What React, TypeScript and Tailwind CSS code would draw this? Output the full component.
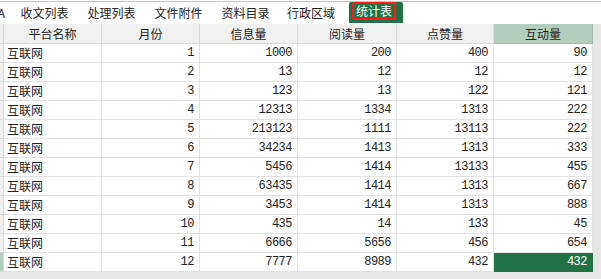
import React from 'react';

const rows: [number, number, number, number, number][] = [
  [1, 1000, 200, 400, 90],
  [2, 13, 12, 12, 12],
  [3, 123, 13, 122, 121],
  [4, 12313, 1334, 1313, 222],
  [5, 213123, 1111, 13113, 222],
  [6, 34234, 1413, 1313, 333],
  [7, 5456, 1414, 13133, 455],
  [8, 63435, 1414, 1313, 667],
  [9, 3453, 1414, 1313, 888],
  [10, 435, 14, 133, 45],
  [11, 6666, 5656, 456, 654],
  [12, 7777, 8989, 432, 432],
];

const tabs = ['收文列表', '处理列表', '文件附件', '资料目录'];
const headers = ['平台名称', '月份', '信息量', '阅读量', '点赞量'];

const cjk = { fontFamily: '"Noto Sans CJK SC", "Noto Sans", sans-serif' };
const num = { fontFamily: '"Liberation Mono", monospace' };

const grid = 'grid grid-cols-[4px_98px_98px_98px_99px_97px_99px_8px]';

const App: React.FC = () => {
  return (
    <div className="w-[601px] h-[279px] bg-white overflow-hidden text-[#222]" style={cjk}>
      {/* Sheet tabs */}
      <div className="h-[24px] pt-[1px]">
        <div className="h-[23px] border-t border-[#c4c4c4] flex items-start text-[12px]">
          <div className="w-[11px] h-[22px] flex items-center overflow-hidden">
            <div className="w-[5px] overflow-hidden flex justify-end">
              <span className="shrink-0">A</span>
            </div>
          </div>
          {tabs.map((t) => (
            <div key={t} className="w-[67px] h-[22px] flex items-center justify-center">{t}</div>
          ))}
          <div className="w-[64px] h-[22px] flex items-center justify-center">行政区域</div>
          <div className="w-[6px]" />
          <div className="h-[21px] bg-[#217346] pl-[3px] pr-[7px] pt-[0px] rounded-t-[2px]">
            <div className="h-[18px] border-2 border-[#ff1a1a] rounded-[3px] px-[2px] flex items-center text-white leading-none">
              统计表
            </div>
          </div>
        </div>
      </div>

      {/* Header row */}
      <div className={`${grid} h-[20px] text-[12px]`}>
        <div className="bg-[#f0f0f0] border-r border-b border-[#d4d4d4]" />
        {headers.map((h) => (
          <div key={h} className="bg-[#f0f0f0] border-r border-b border-[#d9d9d9] flex items-center justify-center">{h}</div>
        ))}
        <div className="bg-[#b5cdbf] border-r border-b border-[#9fbcaa] flex items-center justify-center">互动量</div>
        <div className="bg-[#e6e6e6]" />
      </div>

      {/* Data rows */}
      {rows.map((r, i) => {
        const last = i === rows.length - 1;
        return (
          <div key={i} className={`${grid} h-[19px] text-[12px]`}>
            <div className={`border-r border-b border-[#d9d9d9] ${last ? 'bg-[#b5cdbf]' : 'bg-[#f0f0f0]'}`} />
            <div className="border-r border-b border-[#e1e1e1] flex items-center pl-[3px]">互联网</div>
            {r.map((v, j) => {
              const hl = last && j === 4;
              return (
                <div
                  key={j}
                  style={num}
                  className={`border-r border-b flex items-center justify-end pr-[5px] tracking-[-0.5px] ${hl ? 'bg-[#217346] text-white border-[#217346]' : 'border-[#e1e1e1]'}`}
                >
                  {v}
                </div>
              );
            })}
            <div className="bg-[#e6e6e6]" />
          </div>
        );
      })}
      <div className="h-[8px] bg-[#e6e6e6]" />
    </div>
  );
};

export default App;
